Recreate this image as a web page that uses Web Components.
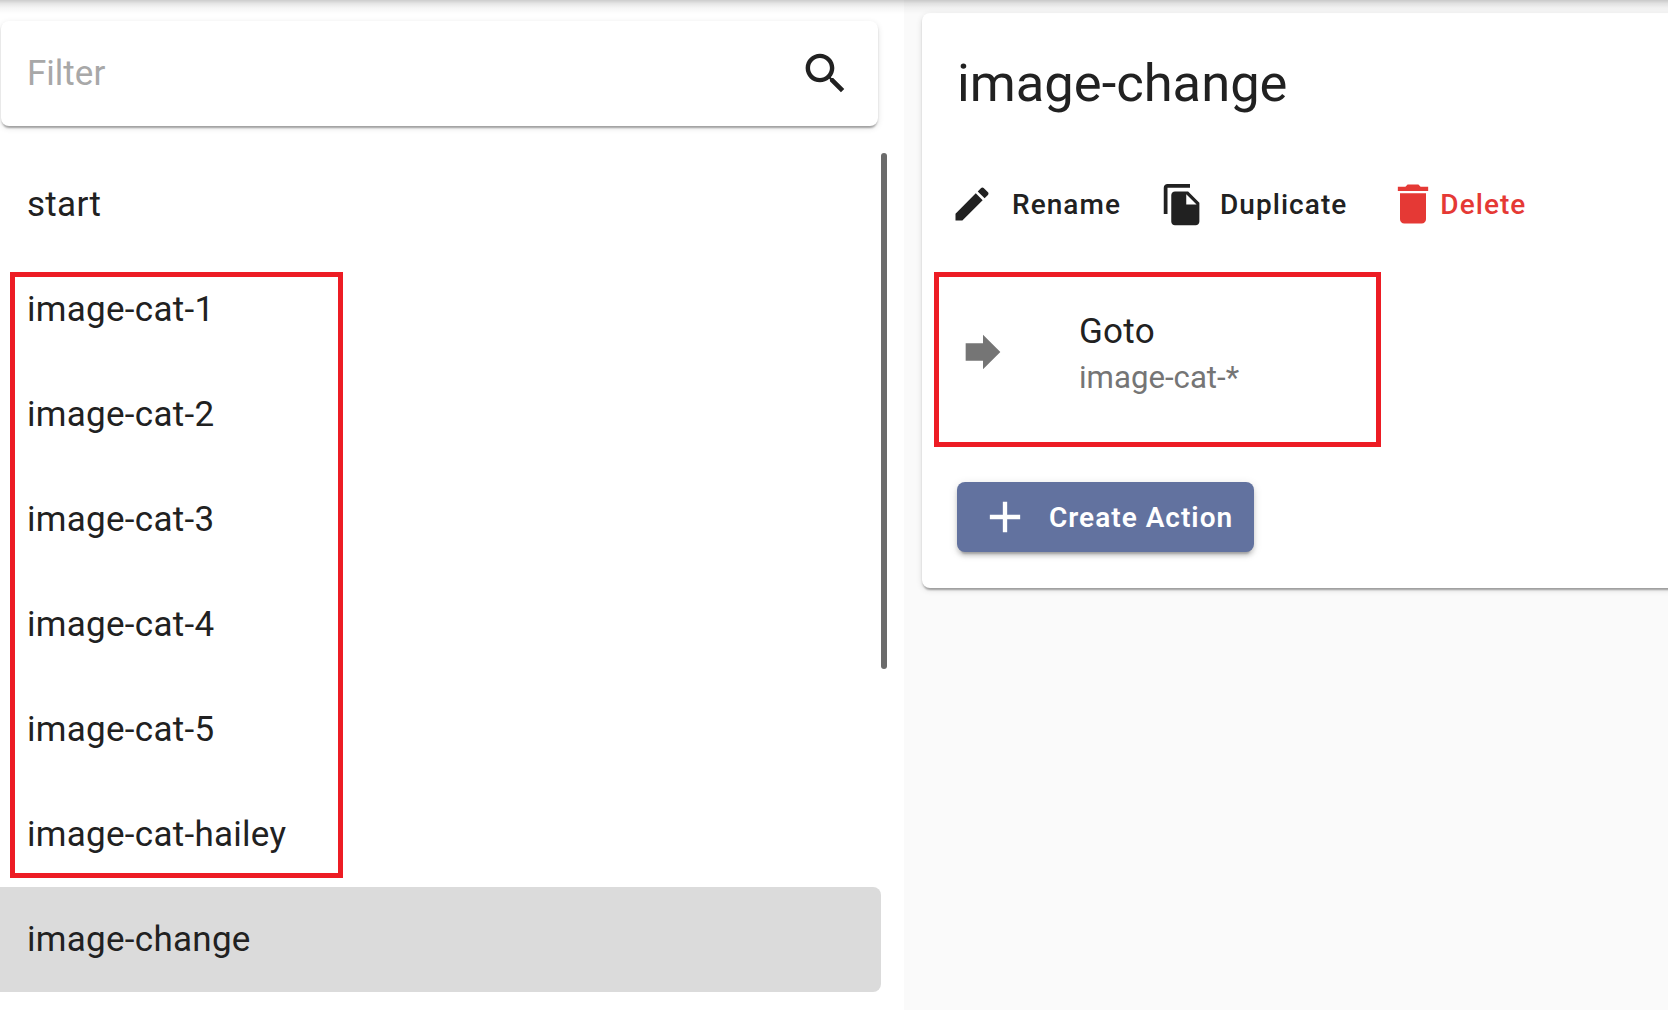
<!DOCTYPE html>
<html>
<head>
<meta charset="utf-8">
<title>image-change</title>
<style>
  html, body { margin: 0; height: 100%; overflow: hidden; }
  body { font-family: Roboto, "Liberation Sans", sans-serif; color: #212121; }
</style>
</head>
<body>
<app-shell>
  <filter-box slot="left" placeholder="Filter"></filter-box>
  <state-list slot="left">
    <state-item>start</state-item>
    <state-item>image-cat-1</state-item>
    <state-item>image-cat-2</state-item>
    <state-item>image-cat-3</state-item>
    <state-item>image-cat-4</state-item>
    <state-item>image-cat-5</state-item>
    <state-item>image-cat-hailey</state-item>
    <state-item selected>image-change</state-item>
  </state-list>
  <red-mark slot="left" style="left:10px;top:272px;width:333px;height:606px;--w:5px"></red-mark>

  <state-detail slot="right" heading="image-change">
    <tool-button slot="tools" icon="edit" size="44" gap="18" style="margin:0 0 0 -7px">Rename</tool-button>
    <tool-button slot="tools" icon="copy" size="45" gap="15" style="margin:0 0 0 39px">Duplicate</tool-button>
    <tool-button slot="tools" icon="trash" size="52" gap="1" danger style="margin:0 0 0 40px">Delete</tool-button>
    <action-row slot="actions" title="Goto" detail="image-cat-*"></action-row>
    <raised-button slot="actions">Create Action</raised-button>
  </state-detail>
  <red-mark slot="right" style="left:30px;top:272px;width:447px;height:175px;--w:5px"></red-mark>
</app-shell>

<script>
const ICONS = {
  search: "M15.5 14h-.79l-.28-.27C15.41 12.59 16 11.11 16 9.5 16 5.91 13.09 3 9.5 3S3 5.91 3 9.5 5.91 16 9.5 16c1.61 0 3.09-.59 4.23-1.57l.27.28v.79l5 4.99L20.49 19l-4.99-5zm-6 0C7.01 14 5 11.99 5 9.5S7.01 5 9.5 5 14 7.01 14 9.5 11.99 14 9.5 14z",
  edit: "M3 17.25V21h3.75L17.81 9.94l-3.75-3.75L3 17.25zM20.71 7.04c.39-.39.39-1.02 0-1.41l-2.34-2.34c-.39-.39-1.02-.39-1.41 0l-1.83 1.83 3.75 3.75 1.83-1.83z",
  copy: "M16 1H4c-1.1 0-2 .9-2 2v14h2V3h12V1zm-1 4l6 6v10c0 1.1-.9 2-2 2H7.99C6.89 23 6 22.1 6 21l.01-14c0-1.1.89-2 1.99-2h7zm-1 7h5.5L14 6.5V12z",
  trash: "M6 19c0 1.1.9 2 2 2h8c1.1 0 2-.9 2-2V7H6v12zM19 4h-3.5l-1-1h-5l-1 1H5v2h14V4z",
  forward: "M12 8V4l8 8-8 8v-4H4V8z",
  plus: "M19 13h-6v6h-2v-6H5v-2h6V5h2v6h6v2z"
};

function svgIcon(name, size) {
  return `<svg width="${size}" height="${size}" viewBox="0 0 24 24" fill="currentColor"><path d="${ICONS[name]}"/></svg>`;
}

class AppShell extends HTMLElement {
  constructor() {
    super();
    this.attachShadow({ mode: "open" });
    this.shadowRoot.innerHTML = `
      <style>
        :host { display: block; height: 100vh; overflow: hidden; }
        .grid { position: relative; display: grid; grid-template-columns: 904px 1fr; height: 100%; }
        .pane { position: relative; min-width: 0; overflow: hidden; }
        .left { background: #fff; }
        .right { background: #fafafa; padding: 13px 0 0 18px; }
        .topshadow {
          position: absolute; left: 0; right: 0; top: 0; height: 14px;
          background: linear-gradient(to bottom, rgba(0,0,0,.2), rgba(0,0,0,.1) 25%, rgba(0,0,0,.04) 55%, rgba(0,0,0,0));
          pointer-events: none;
        }
      </style>
      <div class="grid">
        <div class="pane left"><slot name="left"></slot></div>
        <div class="pane right"><slot name="right"></slot></div>
        <div class="topshadow"></div>
      </div>
    `;
  }
}

class FilterBox extends HTMLElement {
  constructor() {
    super();
    this.attachShadow({ mode: "open" });
    this.shadowRoot.innerHTML = `
      <style>
        :host { display: flex; align-items: center; justify-content: space-between; box-sizing: border-box;
          height: 105px; width: 877px; margin: 21px 0 0 1px; padding: 0 26px 0 26px;
          background: #fff; border-radius: 8px;
          box-shadow: 0 4px 2px -2px rgba(0,0,0,.2), 0 2px 2px 0 rgba(0,0,0,.14), 0 2px 6px 0 rgba(0,0,0,.12); }
        span { font-size: 35px; color: #a8a8a8; }
        svg { display: block; color: #212121; }
      </style>
      <span>${this.getAttribute("placeholder")}</span>
      ${svgIcon("search", 53)}
    `;
  }
}

class StateList extends HTMLElement {
  constructor() {
    super();
    this.attachShadow({ mode: "open" });
    this.shadowRoot.innerHTML = `
      <style>
        :host { display: block; position: relative; width: 881px; margin-top: 26px; }
        .thumb { position: absolute; right: -6px; top: 1px; width: 6px; height: 516px; border-radius: 3px; background: #6b6b6b; }
      </style>
      <slot></slot>
      <div class="thumb"></div>
    `;
  }
}

class StateItem extends HTMLElement {
  constructor() {
    super();
    this.attachShadow({ mode: "open" });
    this.shadowRoot.innerHTML = `
      <style>
        :host { display: flex; align-items: center; box-sizing: border-box; height: 105px; padding: 0 0 0 27px;
          font-size: 35px; letter-spacing: .28px; color: #212121; border-radius: 0 8px 8px 0; }
        :host([selected]) { background: #dbdbdb; }
      </style>
      <slot></slot>
    `;
  }
}

class StateDetail extends HTMLElement {
  constructor() {
    super();
    this.attachShadow({ mode: "open" });
    this.shadowRoot.innerHTML = `
      <style>
        :host { display: block; box-sizing: border-box; width: 900px; height: 575px; padding: 0 0 0 35px;
          background: #fff; border-radius: 8px;
          box-shadow: 0 4px 2px -2px rgba(0,0,0,.2), 0 2px 2px 0 rgba(0,0,0,.14), 0 2px 6px 0 rgba(0,0,0,.12); }
        h1 { margin: 0; padding-top: 10px; box-sizing: border-box; height: 130px; display: flex; align-items: center; font-size: 52.5px; font-weight: 400; color: #212121; }
        .tools { display: flex; align-items: center; height: 60px; margin-top: 31px; }
        .actions { margin-top: 58px; }
      </style>
      <h1>${this.getAttribute("heading")}</h1>
      <div class="tools"><slot name="tools"></slot></div>
      <div class="actions"><slot name="actions"></slot></div>
    `;
  }
}

class ToolButton extends HTMLElement {
  constructor() {
    super();
    this.attachShadow({ mode: "open" });
    const gap = this.getAttribute("gap") || 0;
    this.shadowRoot.innerHTML = `
      <style>
        :host { display: inline-flex; align-items: center; gap: ${gap}px; font-size: 28px; font-weight: 500;
          letter-spacing: 1.05px; color: #212121; }
        :host([danger]) { color: #e53935; }
        svg { display: block; flex: none; }
      </style>
      ${svgIcon(this.getAttribute("icon"), this.getAttribute("size"))}
      <slot></slot>
    `;
  }
}

class ActionRow extends HTMLElement {
  constructor() {
    super();
    this.attachShadow({ mode: "open" });
    this.shadowRoot.innerHTML = `
      <style>
        :host { display: flex; align-items: center; height: 120px; }
        svg { display: block; flex: none; color: #757575; }
        .text { margin-left: 70px; padding-top: 2px; display: flex; flex-direction: column; }
        .title { font-size: 35px; letter-spacing: .28px; line-height: 49px; color: #212121; }
        .detail { font-size: 31.2px; line-height: 44px; color: #757575; }
      </style>
      ${svgIcon("forward", 52)}
      <div class="text">
        <div class="title">${this.getAttribute("title")}</div>
        <div class="detail">${this.getAttribute("detail")}</div>
      </div>
    `;
  }
}

class RaisedButton extends HTMLElement {
  constructor() {
    super();
    this.attachShadow({ mode: "open" });
    this.shadowRoot.innerHTML = `
      <style>
        :host { display: inline-flex; align-items: center; box-sizing: border-box; width: 297px; height: 70px;
          margin-top: 70px; padding-left: 22px; gap: 18px;
          background: #62729f; color: #fff; border-radius: 8px; font-size: 28px; font-weight: 600; letter-spacing: 1px;
          box-shadow: 0 6px 2px -4px rgba(0,0,0,.2), 0 4px 4px 0 rgba(0,0,0,.14), 0 2px 10px 0 rgba(0,0,0,.12); }
        svg { display: block; flex: none; }
      </style>
      ${svgIcon("plus", 52)}
      <slot></slot>
    `;
  }
}

class RedMark extends HTMLElement {
  constructor() {
    super();
    this.attachShadow({ mode: "open" });
    this.shadowRoot.innerHTML = `
      <style>
        :host { position: absolute; display: block; box-sizing: border-box; border: var(--w, 4px) solid #ed1c24; pointer-events: none; }
      </style>
    `;
  }
}

customElements.define("app-shell", AppShell);
customElements.define("filter-box", FilterBox);
customElements.define("state-list", StateList);
customElements.define("state-item", StateItem);
customElements.define("state-detail", StateDetail);
customElements.define("tool-button", ToolButton);
customElements.define("action-row", ActionRow);
customElements.define("raised-button", RaisedButton);
customElements.define("red-mark", RedMark);
</script>
</body>
</html>
